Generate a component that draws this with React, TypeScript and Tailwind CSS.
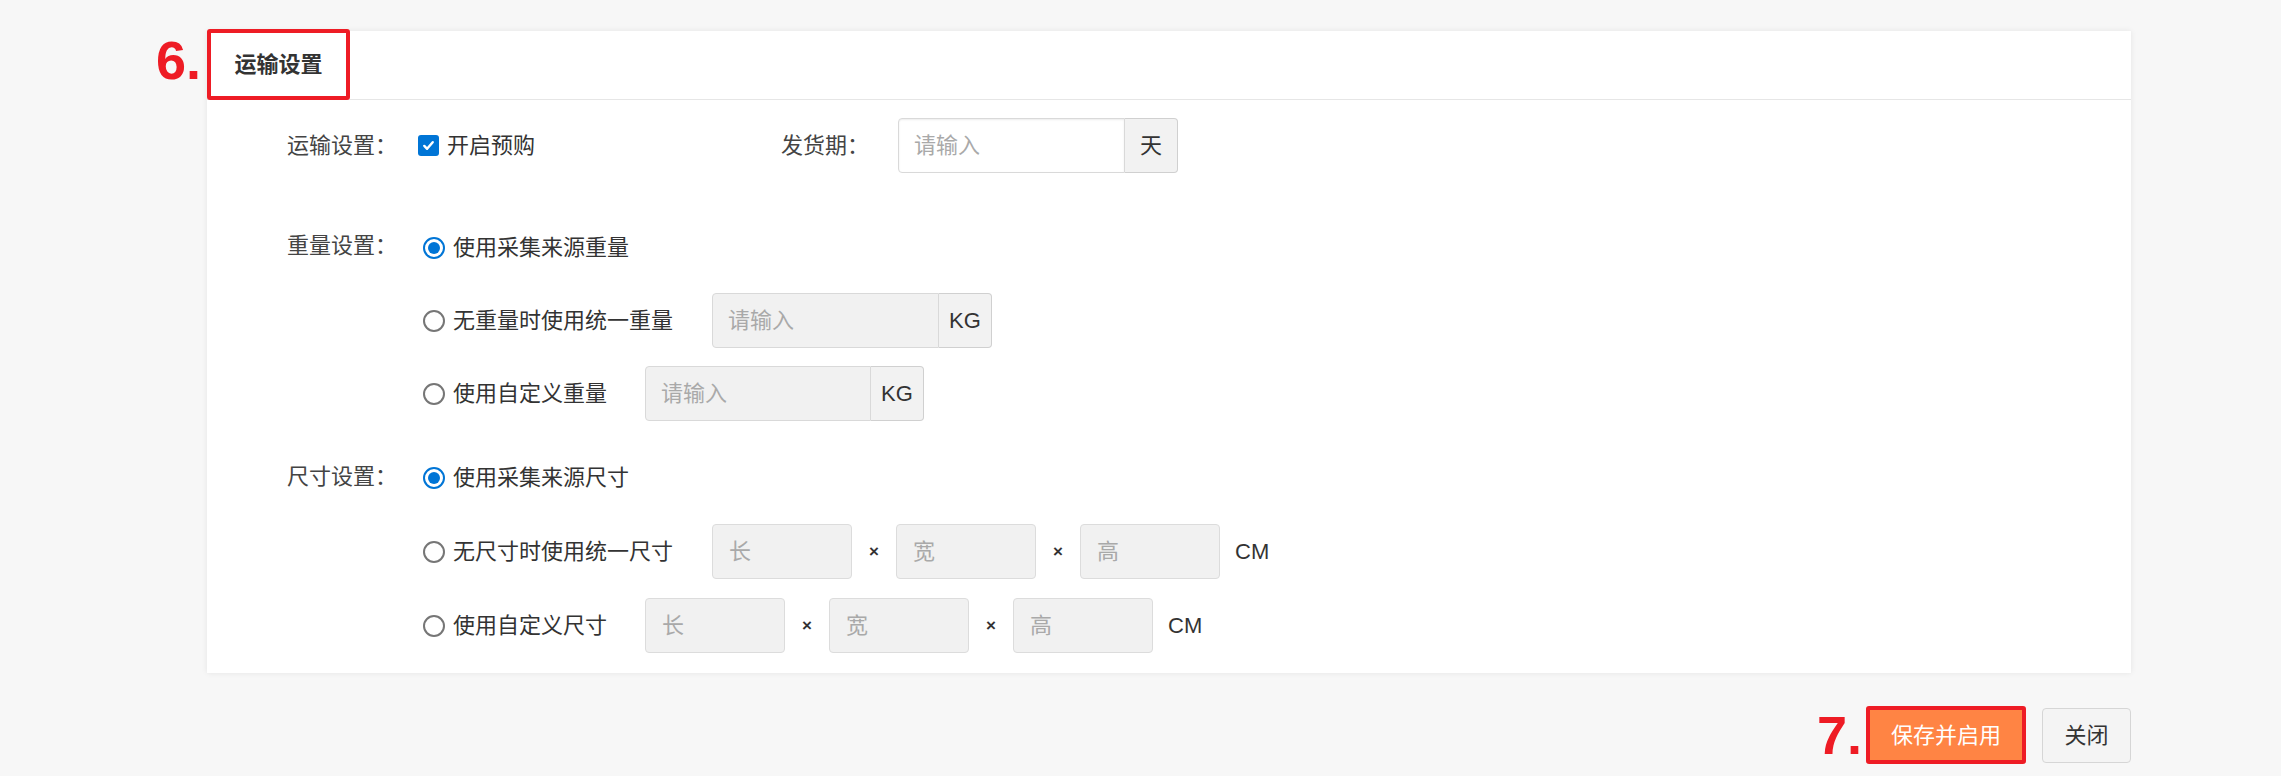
import type { ReactNode } from 'react'

function Radio({ checked }: { checked?: boolean }) {
  if (checked) {
    return (
      <span className="flex h-[22px] w-[22px] shrink-0 items-center justify-center rounded-full border-2 border-[#0075d6] bg-white">
        <span className="h-[12px] w-[12px] rounded-full bg-[#0075d6]" />
      </span>
    )
  }
  return <span className="h-[22px] w-[22px] shrink-0 rounded-full border-2 border-[#767676] bg-white" />
}

function Checkbox() {
  return (
    <span className="flex h-[21px] w-[21px] shrink-0 items-center justify-center rounded-[3px] bg-[#0075d6]">
      <svg viewBox="0 0 16 16" className="h-[15px] w-[15px]" fill="none" stroke="white" strokeWidth="2.6" strokeLinecap="round" strokeLinejoin="round">
        <path d="M3.5 8.5l3 3 6-7" />
      </svg>
    </span>
  )
}

function AddonInput({ unit, disabled, width }: { unit: string; disabled?: boolean; width: string }) {
  return (
    <div className="flex h-[55px]">
      <input
        disabled={disabled}
        placeholder="请输入"
        className={`${width} h-full rounded-l-[4px] border border-[#d9d9d9] px-[15px] text-[22px] outline-none placeholder:text-[#a9a9a9] ${
          disabled ? 'bg-[#f1f1f1]' : 'bg-white shadow-[inset_0_1px_2px_rgba(0,0,0,0.08)]'
        }`}
      />
      <span className="flex w-[53px] items-center justify-center rounded-r-[4px] border border-l-0 border-[#d0d0d0] bg-[#f2f2f2] text-[22px] text-[#333]">
        {unit}
      </span>
    </div>
  )
}

function DimInput({ ph }: { ph: string }) {
  return (
    <input
      disabled
      placeholder={ph}
      className="h-[55px] w-[140px] rounded-[4px] border border-[#dcdcdc] bg-[#f1f1f1] px-[16px] text-[22px] outline-none placeholder:text-[#a9a9a9]"
    />
  )
}

function Dims() {
  return (
    <div className="flex items-center">
      <DimInput ph="长" />
      <span className="w-[44px] text-center text-[17px] font-bold text-[#333]">×</span>
      <DimInput ph="宽" />
      <span className="w-[44px] text-center text-[17px] font-bold text-[#333]">×</span>
      <DimInput ph="高" />
      <span className="ml-[15px] text-[22px] text-[#333]">CM</span>
    </div>
  )
}

function Option({ checked, label, children, gap }: { checked?: boolean; label: string; children?: ReactNode; gap?: string }) {
  return (
    <div className="flex h-[55px] items-center">
      <Radio checked={checked} />
      <span className="ml-[8px] text-[22px] text-[#333]">{label}</span>
      {children && <div className={gap ?? 'ml-[39px]'}>{children}</div>}
    </div>
  )
}

export default function App() {
  return (
    <div className="min-h-[776px] bg-[#f7f7f7] pt-[31px] font-['Liberation_Sans','Noto_Sans_CJK_SC',sans-serif] text-[#333]">
      <div className="ml-[207px] w-[1924px]">
        <div className="relative bg-white shadow-[0_0_6px_rgba(0,0,0,0.08)]">
          <span className="absolute right-full top-[2px] mr-[6px] text-[54px] font-bold leading-none text-[#ee1c25]">6.</span>
          <div className="flex h-[69px] border-b border-[#e6e6e6]">
            <div className="-mt-[2px] flex h-[71px] w-[143px] items-center justify-center rounded-[3px] border-[4px] border-[#ee1c25] text-[22px] font-bold text-[#333]">
              运输设置
            </div>
          </div>

          <div className="pb-[20px] pl-[80px] pt-[18px]">
            <div className="flex h-[55px] items-center">
              <span className="w-[131px] text-[22px] text-[#444]">运输设置：</span>
              <Checkbox />
              <span className="ml-[8px] text-[22px] text-[#333]">开启预购</span>
              <span className="ml-[246px] w-[117px] text-[22px] text-[#444]">发货期：</span>
              <AddonInput unit="天" width="w-[227px]" />
            </div>

            <div className="mt-[47px] flex">
              <span className="w-[136px] pt-[9px] text-[22px] text-[#444]">重量设置：</span>
              <div className="flex flex-col gap-[18px]">
                <Option checked label="使用采集来源重量" />
                <Option label="无重量时使用统一重量">
                  <AddonInput unit="KG" disabled width="w-[227px]" />
                </Option>
                <Option label="使用自定义重量" gap="ml-[38px]">
                  <AddonInput unit="KG" disabled width="w-[226px]" />
                </Option>
              </div>
            </div>

            <div className="mt-[29px] flex">
              <span className="w-[136px] pt-[10px] text-[22px] text-[#444]">尺寸设置：</span>
              <div className="flex flex-col gap-[19px]">
                <Option checked label="使用采集来源尺寸" />
                <Option label="无尺寸时使用统一尺寸">
                  <Dims />
                </Option>
                <Option label="使用自定义尺寸" gap="ml-[38px]">
                  <Dims />
                </Option>
              </div>
            </div>
          </div>
        </div>

        <div className="mt-[33px] flex items-center justify-end">
          <span className="mr-[4px] text-[54px] font-bold leading-none text-[#ee1c25]">7.</span>
          <button className="h-[58px] w-[160px] rounded-[3px] border-[4px] border-[#ee1c25] bg-[#ff8444] text-[22px] text-white">
            保存并启用
          </button>
          <button className="ml-[16px] h-[55px] w-[89px] rounded-[4px] border border-[#d6d6d6] bg-[#f4f4f4] text-[22px] text-[#333]">
            关闭
          </button>
        </div>
      </div>
    </div>
  )
}
